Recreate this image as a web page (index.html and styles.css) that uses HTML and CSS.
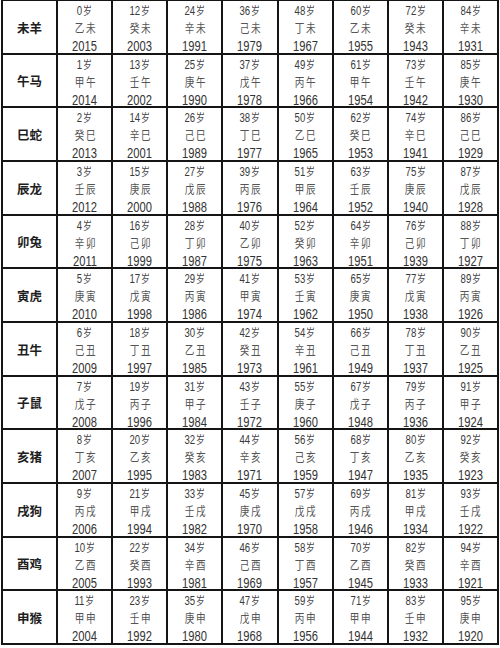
FILE: index.html
```html
<!DOCTYPE html>
<html lang="zh-CN">
<head>
<meta charset="utf-8">
<title>生肖年龄对照表</title>
<link rel="stylesheet" href="styles.css">
</head>
<body>
<div class="table">
<div class="label">未羊</div>
<div class="cell"><span class="age">0<i>岁</i></span><span class="gz">乙未</span><span class="yr">2015</span></div>
<div class="cell"><span class="age">12<i>岁</i></span><span class="gz">癸未</span><span class="yr">2003</span></div>
<div class="cell"><span class="age">24<i>岁</i></span><span class="gz">辛未</span><span class="yr">1991</span></div>
<div class="cell"><span class="age">36<i>岁</i></span><span class="gz">己未</span><span class="yr">1979</span></div>
<div class="cell"><span class="age">48<i>岁</i></span><span class="gz">丁未</span><span class="yr">1967</span></div>
<div class="cell"><span class="age">60<i>岁</i></span><span class="gz">乙未</span><span class="yr">1955</span></div>
<div class="cell"><span class="age">72<i>岁</i></span><span class="gz">癸未</span><span class="yr">1943</span></div>
<div class="cell"><span class="age">84<i>岁</i></span><span class="gz">辛未</span><span class="yr">1931</span></div>

<div class="label">午马</div>
<div class="cell"><span class="age">1<i>岁</i></span><span class="gz">甲午</span><span class="yr">2014</span></div>
<div class="cell"><span class="age">13<i>岁</i></span><span class="gz">壬午</span><span class="yr">2002</span></div>
<div class="cell"><span class="age">25<i>岁</i></span><span class="gz">庚午</span><span class="yr">1990</span></div>
<div class="cell"><span class="age">37<i>岁</i></span><span class="gz">戊午</span><span class="yr">1978</span></div>
<div class="cell"><span class="age">49<i>岁</i></span><span class="gz">丙午</span><span class="yr">1966</span></div>
<div class="cell"><span class="age">61<i>岁</i></span><span class="gz">甲午</span><span class="yr">1954</span></div>
<div class="cell"><span class="age">73<i>岁</i></span><span class="gz">壬午</span><span class="yr">1942</span></div>
<div class="cell"><span class="age">85<i>岁</i></span><span class="gz">庚午</span><span class="yr">1930</span></div>

<div class="label">巳蛇</div>
<div class="cell"><span class="age">2<i>岁</i></span><span class="gz">癸巳</span><span class="yr">2013</span></div>
<div class="cell"><span class="age">14<i>岁</i></span><span class="gz">辛巳</span><span class="yr">2001</span></div>
<div class="cell"><span class="age">26<i>岁</i></span><span class="gz">己巳</span><span class="yr">1989</span></div>
<div class="cell"><span class="age">38<i>岁</i></span><span class="gz">丁巳</span><span class="yr">1977</span></div>
<div class="cell"><span class="age">50<i>岁</i></span><span class="gz">乙巳</span><span class="yr">1965</span></div>
<div class="cell"><span class="age">62<i>岁</i></span><span class="gz">癸巳</span><span class="yr">1953</span></div>
<div class="cell"><span class="age">74<i>岁</i></span><span class="gz">辛巳</span><span class="yr">1941</span></div>
<div class="cell"><span class="age">86<i>岁</i></span><span class="gz">己巳</span><span class="yr">1929</span></div>

<div class="label">辰龙</div>
<div class="cell"><span class="age">3<i>岁</i></span><span class="gz">壬辰</span><span class="yr">2012</span></div>
<div class="cell"><span class="age">15<i>岁</i></span><span class="gz">庚辰</span><span class="yr">2000</span></div>
<div class="cell"><span class="age">27<i>岁</i></span><span class="gz">戊辰</span><span class="yr">1988</span></div>
<div class="cell"><span class="age">39<i>岁</i></span><span class="gz">丙辰</span><span class="yr">1976</span></div>
<div class="cell"><span class="age">51<i>岁</i></span><span class="gz">甲辰</span><span class="yr">1964</span></div>
<div class="cell"><span class="age">63<i>岁</i></span><span class="gz">壬辰</span><span class="yr">1952</span></div>
<div class="cell"><span class="age">75<i>岁</i></span><span class="gz">庚辰</span><span class="yr">1940</span></div>
<div class="cell"><span class="age">87<i>岁</i></span><span class="gz">戊辰</span><span class="yr">1928</span></div>

<div class="label">卯兔</div>
<div class="cell"><span class="age">4<i>岁</i></span><span class="gz">辛卯</span><span class="yr">2011</span></div>
<div class="cell"><span class="age">16<i>岁</i></span><span class="gz">己卯</span><span class="yr">1999</span></div>
<div class="cell"><span class="age">28<i>岁</i></span><span class="gz">丁卯</span><span class="yr">1987</span></div>
<div class="cell"><span class="age">40<i>岁</i></span><span class="gz">乙卯</span><span class="yr">1975</span></div>
<div class="cell"><span class="age">52<i>岁</i></span><span class="gz">癸卯</span><span class="yr">1963</span></div>
<div class="cell"><span class="age">64<i>岁</i></span><span class="gz">辛卯</span><span class="yr">1951</span></div>
<div class="cell"><span class="age">76<i>岁</i></span><span class="gz">己卯</span><span class="yr">1939</span></div>
<div class="cell"><span class="age">88<i>岁</i></span><span class="gz">丁卯</span><span class="yr">1927</span></div>

<div class="label">寅虎</div>
<div class="cell"><span class="age">5<i>岁</i></span><span class="gz">庚寅</span><span class="yr">2010</span></div>
<div class="cell"><span class="age">17<i>岁</i></span><span class="gz">戊寅</span><span class="yr">1998</span></div>
<div class="cell"><span class="age">29<i>岁</i></span><span class="gz">丙寅</span><span class="yr">1986</span></div>
<div class="cell"><span class="age">41<i>岁</i></span><span class="gz">甲寅</span><span class="yr">1974</span></div>
<div class="cell"><span class="age">53<i>岁</i></span><span class="gz">壬寅</span><span class="yr">1962</span></div>
<div class="cell"><span class="age">65<i>岁</i></span><span class="gz">庚寅</span><span class="yr">1950</span></div>
<div class="cell"><span class="age">77<i>岁</i></span><span class="gz">戊寅</span><span class="yr">1938</span></div>
<div class="cell"><span class="age">89<i>岁</i></span><span class="gz">丙寅</span><span class="yr">1926</span></div>

<div class="label">丑牛</div>
<div class="cell"><span class="age">6<i>岁</i></span><span class="gz">己丑</span><span class="yr">2009</span></div>
<div class="cell"><span class="age">18<i>岁</i></span><span class="gz">丁丑</span><span class="yr">1997</span></div>
<div class="cell"><span class="age">30<i>岁</i></span><span class="gz">乙丑</span><span class="yr">1985</span></div>
<div class="cell"><span class="age">42<i>岁</i></span><span class="gz">癸丑</span><span class="yr">1973</span></div>
<div class="cell"><span class="age">54<i>岁</i></span><span class="gz">辛丑</span><span class="yr">1961</span></div>
<div class="cell"><span class="age">66<i>岁</i></span><span class="gz">己丑</span><span class="yr">1949</span></div>
<div class="cell"><span class="age">78<i>岁</i></span><span class="gz">丁丑</span><span class="yr">1937</span></div>
<div class="cell"><span class="age">90<i>岁</i></span><span class="gz">乙丑</span><span class="yr">1925</span></div>

<div class="label">子鼠</div>
<div class="cell"><span class="age">7<i>岁</i></span><span class="gz">戊子</span><span class="yr">2008</span></div>
<div class="cell"><span class="age">19<i>岁</i></span><span class="gz">丙子</span><span class="yr">1996</span></div>
<div class="cell"><span class="age">31<i>岁</i></span><span class="gz">甲子</span><span class="yr">1984</span></div>
<div class="cell"><span class="age">43<i>岁</i></span><span class="gz">壬子</span><span class="yr">1972</span></div>
<div class="cell"><span class="age">55<i>岁</i></span><span class="gz">庚子</span><span class="yr">1960</span></div>
<div class="cell"><span class="age">67<i>岁</i></span><span class="gz">戊子</span><span class="yr">1948</span></div>
<div class="cell"><span class="age">79<i>岁</i></span><span class="gz">丙子</span><span class="yr">1936</span></div>
<div class="cell"><span class="age">91<i>岁</i></span><span class="gz">甲子</span><span class="yr">1924</span></div>

<div class="label">亥猪</div>
<div class="cell"><span class="age">8<i>岁</i></span><span class="gz">丁亥</span><span class="yr">2007</span></div>
<div class="cell"><span class="age">20<i>岁</i></span><span class="gz">乙亥</span><span class="yr">1995</span></div>
<div class="cell"><span class="age">32<i>岁</i></span><span class="gz">癸亥</span><span class="yr">1983</span></div>
<div class="cell"><span class="age">44<i>岁</i></span><span class="gz">辛亥</span><span class="yr">1971</span></div>
<div class="cell"><span class="age">56<i>岁</i></span><span class="gz">己亥</span><span class="yr">1959</span></div>
<div class="cell"><span class="age">68<i>岁</i></span><span class="gz">丁亥</span><span class="yr">1947</span></div>
<div class="cell"><span class="age">80<i>岁</i></span><span class="gz">乙亥</span><span class="yr">1935</span></div>
<div class="cell"><span class="age">92<i>岁</i></span><span class="gz">癸亥</span><span class="yr">1923</span></div>

<div class="label">戌狗</div>
<div class="cell"><span class="age">9<i>岁</i></span><span class="gz">丙戌</span><span class="yr">2006</span></div>
<div class="cell"><span class="age">21<i>岁</i></span><span class="gz">甲戌</span><span class="yr">1994</span></div>
<div class="cell"><span class="age">33<i>岁</i></span><span class="gz">壬戌</span><span class="yr">1982</span></div>
<div class="cell"><span class="age">45<i>岁</i></span><span class="gz">庚戌</span><span class="yr">1970</span></div>
<div class="cell"><span class="age">57<i>岁</i></span><span class="gz">戊戌</span><span class="yr">1958</span></div>
<div class="cell"><span class="age">69<i>岁</i></span><span class="gz">丙戌</span><span class="yr">1946</span></div>
<div class="cell"><span class="age">81<i>岁</i></span><span class="gz">甲戌</span><span class="yr">1934</span></div>
<div class="cell"><span class="age">93<i>岁</i></span><span class="gz">壬戌</span><span class="yr">1922</span></div>

<div class="label">酉鸡</div>
<div class="cell"><span class="age">10<i>岁</i></span><span class="gz">乙酉</span><span class="yr">2005</span></div>
<div class="cell"><span class="age">22<i>岁</i></span><span class="gz">癸酉</span><span class="yr">1993</span></div>
<div class="cell"><span class="age">34<i>岁</i></span><span class="gz">辛酉</span><span class="yr">1981</span></div>
<div class="cell"><span class="age">46<i>岁</i></span><span class="gz">己酉</span><span class="yr">1969</span></div>
<div class="cell"><span class="age">58<i>岁</i></span><span class="gz">丁酉</span><span class="yr">1957</span></div>
<div class="cell"><span class="age">70<i>岁</i></span><span class="gz">乙酉</span><span class="yr">1945</span></div>
<div class="cell"><span class="age">82<i>岁</i></span><span class="gz">癸酉</span><span class="yr">1933</span></div>
<div class="cell"><span class="age">94<i>岁</i></span><span class="gz">辛酉</span><span class="yr">1921</span></div>

<div class="label">申猴</div>
<div class="cell"><span class="age">11<i>岁</i></span><span class="gz">甲申</span><span class="yr">2004</span></div>
<div class="cell"><span class="age">23<i>岁</i></span><span class="gz">壬申</span><span class="yr">1992</span></div>
<div class="cell"><span class="age">35<i>岁</i></span><span class="gz">庚申</span><span class="yr">1980</span></div>
<div class="cell"><span class="age">47<i>岁</i></span><span class="gz">戊申</span><span class="yr">1968</span></div>
<div class="cell"><span class="age">59<i>岁</i></span><span class="gz">丙申</span><span class="yr">1956</span></div>
<div class="cell"><span class="age">71<i>岁</i></span><span class="gz">甲申</span><span class="yr">1944</span></div>
<div class="cell"><span class="age">83<i>岁</i></span><span class="gz">壬申</span><span class="yr">1932</span></div>
<div class="cell"><span class="age">95<i>岁</i></span><span class="gz">庚申</span><span class="yr">1920</span></div>
</div>
</body>
</html>
```

FILE: styles.css
```css
html, body {
  margin: 0;
  padding: 0;
  background: #ffffff;
}

body {
  width: 500px;
  height: 648px;
  overflow: hidden;
}

.table {
  margin: -1px 0 0 1px;
  width: 498px;
  height: 646px;
  box-sizing: border-box;
  padding: 2px;
  background: #151515;
  display: grid;
  grid-template-columns: repeat(9, 1fr);
  grid-template-rows: repeat(12, 1fr);
  gap: 2px;
}

.label,
.cell {
  background: #ffffff;
  min-height: 0;
  display: grid;
  justify-items: center;
  align-content: center;
  padding-top: 2px;
}

.label {
  font-family: "Noto Sans CJK SC", sans-serif;
  font-weight: 700;
  font-size: 12.5px;
  line-height: 18px;
  color: #1e1e1e;
}

.cell {
  grid-template-rows: 18px 18px 18px;
}

.cell span {
  display: block;
  line-height: 18px;
  text-align: center;
  white-space: nowrap;
  transform: scaleX(0.8);
}

.age {
  font-family: "Liberation Sans", sans-serif;
  font-size: 12px;
  color: #3a3a3a;
}

.age i {
  font-style: normal;
  font-family: "Noto Sans CJK SC", sans-serif;
  font-size: 11px;
  color: #4a4a4a;
  margin-left: 1px;
}

.gz {
  font-family: "Noto Sans CJK SC", sans-serif;
  font-size: 12px;
  letter-spacing: 2px;
  margin-right: -2px;
  color: #555555;
}

.yr {
  font-family: "Liberation Sans", sans-serif;
  font-size: 14px;
  color: #333333;
}
```
